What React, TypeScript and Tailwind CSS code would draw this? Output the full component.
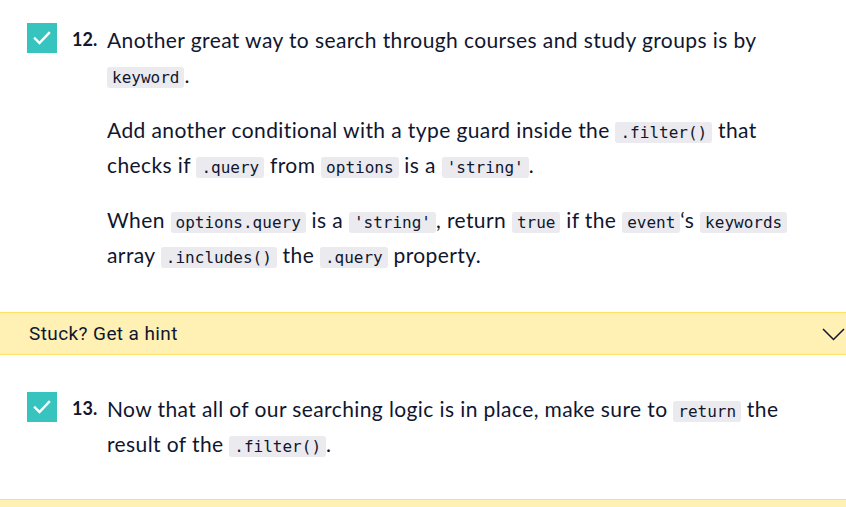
import React from 'react';

function Code({ children }: { children: React.ReactNode }) {
  return (
    <code className="rounded-[3px] bg-[#eaeaef] px-[5px] py-[1px] text-[16px] leading-none tracking-normal text-[#10162f] [font-family:'DejaVu_Sans_Mono',monospace]">
      {children}
    </code>
  );
}

function Check() {
  return (
    <div className="flex h-[30px] w-[30px] shrink-0 items-center justify-center bg-[#37c4bf]">
      <svg width="18" height="14" viewBox="0 0 18 14" fill="none">
        <path d="M2 7.5 L6.5 12 L16 2" stroke="white" strokeWidth="2.4" strokeLinecap="square" />
      </svg>
    </div>
  );
}

function Step({ n, children }: { n: number; children: React.ReactNode }) {
  return (
    <div className="flex pl-[27px] pr-[46px]">
      <div className="mt-[1px]">
        <Check />
      </div>
      <div className="ml-[15px] w-[35px] shrink-0 text-[18px] font-bold tracking-normal">{n}.</div>
      <div className="flex flex-col gap-[20px]">{children}</div>
    </div>
  );
}

export default function App() {
  return (
    <div className="w-[846px] h-[507px] overflow-hidden bg-white text-[21px] leading-[35px] tracking-[0.4px] text-[#10162f] [font-family:Lato,'Noto_Sans',sans-serif]">
      <div className="pt-[22px]">
        <Step n={12}>
          <p>
            Another great way to search through courses and study groups is by <Code>keyword</Code>.
          </p>
          <p>
            Add another conditional with a type guard inside the <Code>.filter()</Code> that checks if <Code>.query</Code> from{' '}
            <Code>options</Code> is a <Code>'string'</Code>.
          </p>
          <p>
            When <Code>options.query</Code> is a <Code>'string'</Code>, return <Code>true</Code> if the <Code>event</Code>‘s{' '}
            <Code>keywords</Code> array <Code>.includes()</Code> the <Code>.query</Code> property.
          </p>
        </Step>
      </div>

      <div className="mt-[40px] flex h-[43px] items-center justify-between border-y border-[#ffe164] bg-[#fff0b3] pl-[29px]">
        <span className="text-[19px] tracking-[0.4px] [font-family:Roboto,sans-serif]">Stuck? Get a hint</span>
        <svg width="23" height="13" viewBox="0 0 23 13" fill="none" className="mr-[1px] mt-[2px]">
          <path d="M1 1 L11.5 11.5 L22 1" stroke="#10162f" strokeWidth="1.5" />
        </svg>
      </div>

      <div className="pt-[36px]">
        <Step n={13}>
          <p>
            Now that all of our searching logic is in place, make sure to <Code>return</Code> the result of the{' '}
            <Code>.filter()</Code>.
          </p>
        </Step>
      </div>

      <div className="mt-[38px] h-[20px] border-t border-[#ffe164] bg-[#fff0b3]" />
    </div>
  );
}
